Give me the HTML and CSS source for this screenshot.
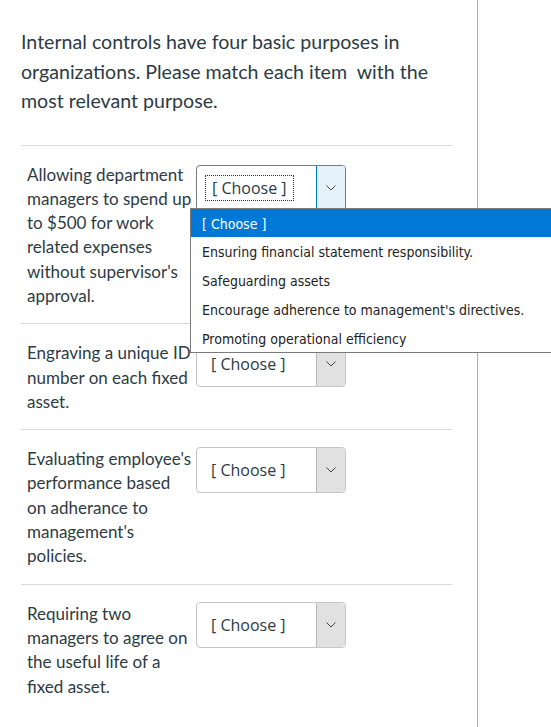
FILE: index.html
```html
<!DOCTYPE html>
<html lang="en">
<head>
  <meta charset="UTF-8" />
  <title>Matching Question</title>
  <link rel="stylesheet" href="styles.css">
</head>
<body>
  <div class="question">
    <p class="question-text">Internal controls have four basic purposes in organizations. Please match each item&nbsp; with the most relevant purpose.</p>

    <!-- Answer rows -->
    <div class="answer">
      <div class="answer-label">Allowing department managers to spend up to $500 for work related expenses without supervisor's approval.</div>
      <div class="select-wrap">
        <div class="select focused">
          <span class="select-value"><span class="focus-ring">[ Choose ]</span></span>
          <span class="select-arrow">
            <svg width="10" height="6" viewBox="0 0 10 6"><path d="M0.5 0.5 L5 5 L9.5 0.5" fill="none" stroke="#444" stroke-width="1"/></svg>
          </span>
        </div>

        <!-- Open option list -->
        <ul class="options">
          <li class="selected">[ Choose ]</li>
          <li>Ensuring financial statement responsibility.</li>
          <li>Safeguarding assets</li>
          <li>Encourage adherence to management's directives.</li>
          <li>Promoting operational efficiency</li>
        </ul>
      </div>
    </div>

    <div class="answer">
      <div class="answer-label">Engraving a unique ID number on each fixed asset.</div>
      <div class="select-wrap">
        <div class="select">
          <span class="select-value">[ Choose ]</span>
          <span class="select-arrow">
            <svg width="10" height="6" viewBox="0 0 10 6"><path d="M0.5 0.5 L5 5 L9.5 0.5" fill="none" stroke="#444" stroke-width="1"/></svg>
          </span>
        </div>
      </div>
    </div>

    <div class="answer">
      <div class="answer-label">Evaluating employee's performance based on adherance to management's policies.</div>
      <div class="select-wrap">
        <div class="select">
          <span class="select-value">[ Choose ]</span>
          <span class="select-arrow">
            <svg width="10" height="6" viewBox="0 0 10 6"><path d="M0.5 0.5 L5 5 L9.5 0.5" fill="none" stroke="#444" stroke-width="1"/></svg>
          </span>
        </div>
      </div>
    </div>

    <div class="answer">
      <div class="answer-label">Requiring two managers to agree on the useful life of a fixed asset.</div>
      <div class="select-wrap">
        <div class="select">
          <span class="select-value">[ Choose ]</span>
          <span class="select-arrow">
            <svg width="10" height="6" viewBox="0 0 10 6"><path d="M0.5 0.5 L5 5 L9.5 0.5" fill="none" stroke="#444" stroke-width="1"/></svg>
          </span>
        </div>
      </div>
    </div>
  </div>
</body>
</html>
```

FILE: styles.css
```css
html, body {
  margin: 0;
  overflow: hidden;
}

body {
  background: #fff;
  color: #2d3b45;
  font-family: Lato, "Open Sans", sans-serif;
}

.question {
  width: 431px;
  min-height: 727px;
  padding: 27px 25px 0 21px;
  border-right: 1px solid #b0b0b0;
}

.question-text {
  margin: 0 0 29px;
  font-size: 19.6px;
  line-height: 29.5px;
}

.answer {
  display: flex;
  align-items: flex-start;
  border-top: 1px solid #d7dadd;
  padding: 17px 0 15px 6px;
}

.answer-label {
  width: 166.6px;
  margin-right: 2.4px;
  flex: none;
  font-size: 17px;
  line-height: 24.3px;
}

.select-wrap {
  position: relative;
}

.select {
  display: flex;
  width: 148px;
  height: 44px;
  border: 1px solid #c4c6c8;
  border-radius: 4px;
  background: #fff;
  font-family: "Open Sans", sans-serif;
  font-size: 16px;
  color: #2d3b45;
  overflow: hidden;
}

.select-value {
  flex: 1;
  display: flex;
  align-items: center;
  padding-left: 14px;
}

.select-arrow {
  width: 28px;
  display: flex;
  align-items: center;
  justify-content: center;
  background: #e1e1e1;
  border-left: 1px solid #b9b9b9;
}

.select.focused {
  margin-top: 2px;
  border-color: #7a7a7a;
}

.select.focused .select-value {
  padding-left: 8px;
}

.focus-ring {
  padding: 1px 6px;
  border: 1px dotted #333;
}

.select.focused .select-arrow {
  background: #e5f1fb;
  border-left-color: #0078d7;
}

.options {
  position: absolute;
  top: 45px;
  left: -6px;
  width: 370px;
  margin: 0;
  padding: 0;
  list-style: none;
  background: #fff;
  border: 1px solid #7a7a7a;
  font-family: "DejaVu Sans", sans-serif;
  font-stretch: condensed;
  font-size: 14px;
  color: #222;
  z-index: 2;
}

.options li {
  height: 28.8px;
  line-height: 31px;
  padding-left: 11px;
  white-space: nowrap;
}

.options li.selected {
  background: #0078d7;
  color: #fff;
}
```
